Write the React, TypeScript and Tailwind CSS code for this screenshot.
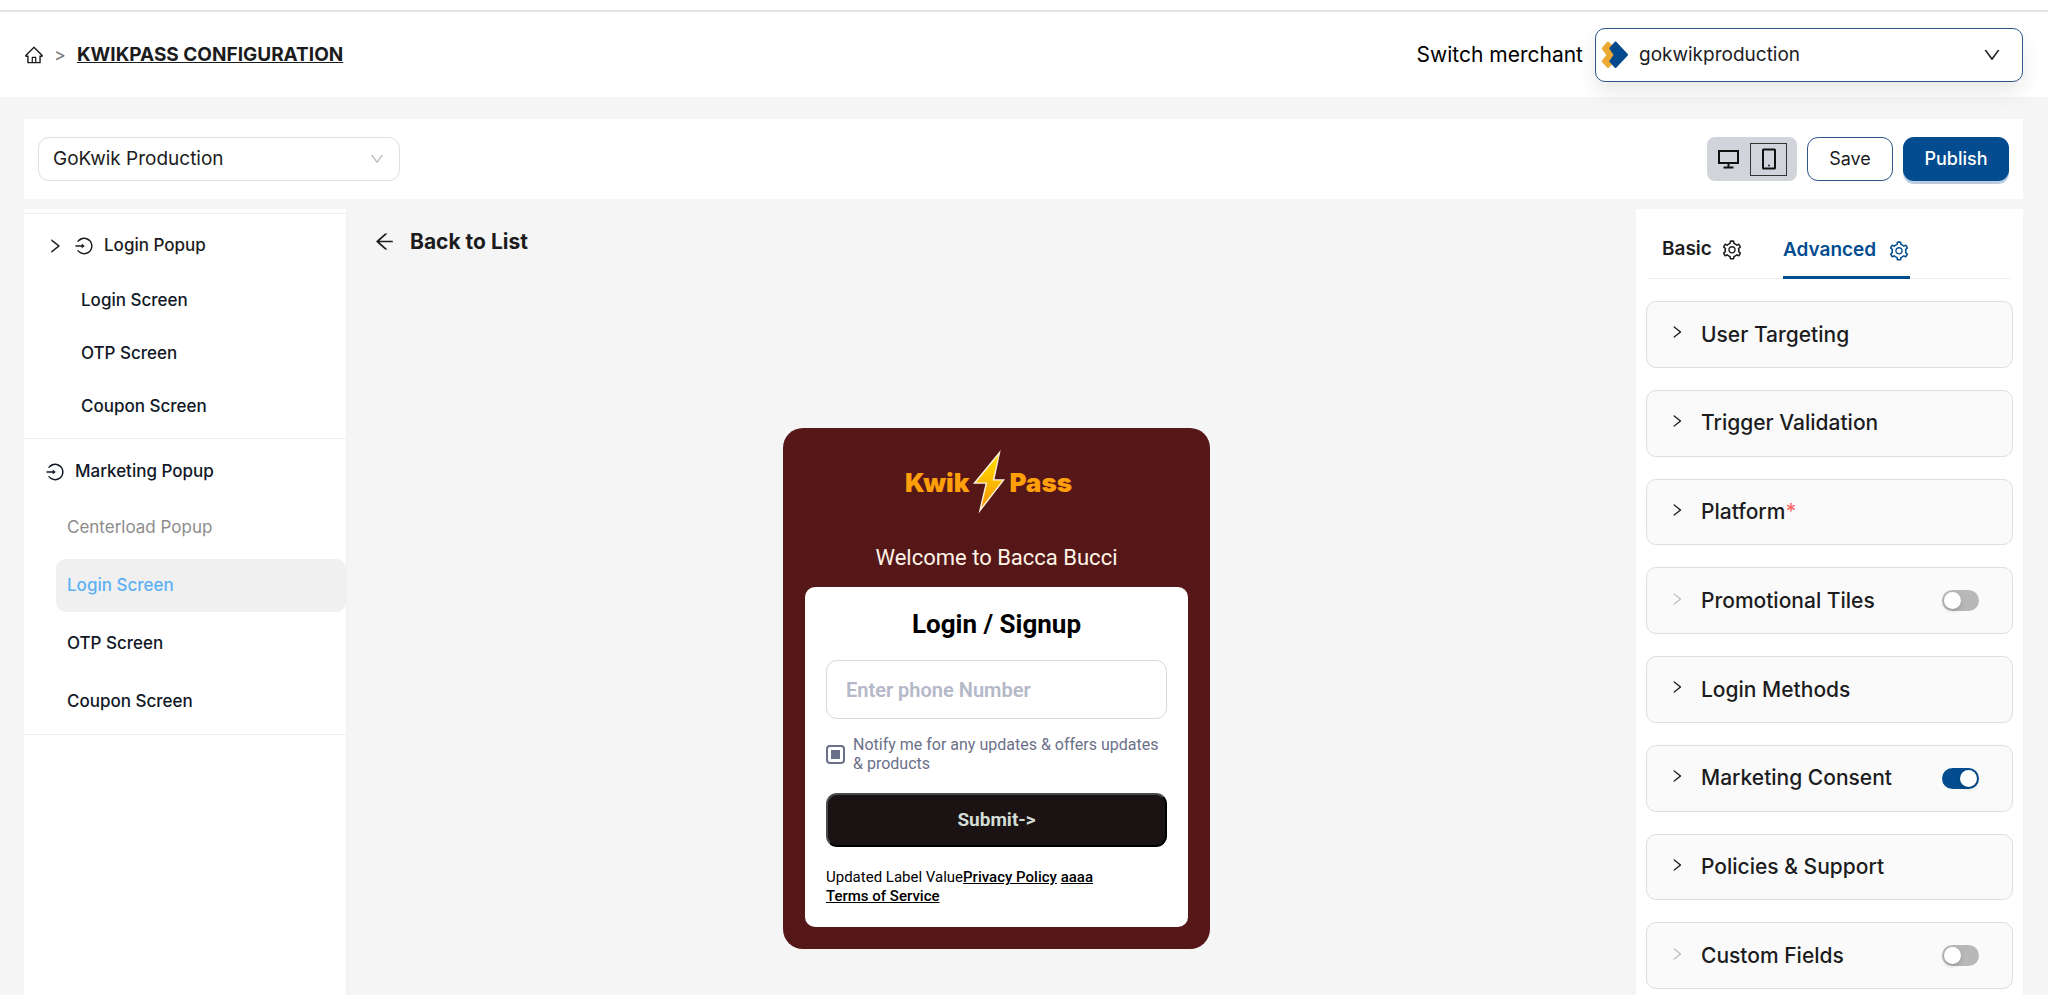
import React, { useState } from 'react'
import {
    AiOutlineArrowLeft,
    AiOutlineDown,
    AiOutlineHome,
    AiOutlineLogin,
    AiOutlineRight,
    AiOutlineSetting,
} from 'react-icons/ai';

const MerchantLogo = () => (
    <svg viewBox="0 0 28 28" className="size-7 shrink-0" strokeWidth="2" strokeLinejoin="round" aria-hidden="true">
        <path d="M7 1.500 1.700 7.300 6.500 14 1.700 20.300 7 26 12 21 12 6.500Z" fill="#ecaa35" stroke="#ecaa35" />
        <path d="M14.500 1.500 26 13.700 14.500 26 9.300 20.300 13.700 14 9.300 7.300Z" fill="#024a8d" stroke="#024a8d" />
    </svg>
);

const DesktopIcon = () => (
    <svg viewBox="0 0 24 24" className="size-6" fill="none" stroke="#111" strokeWidth="2" aria-hidden="true">
        <path d="M3 4h19v12H3zM12.500 16v4M7.500 20.500h10" />
    </svg>
);

const PhoneIcon = () => (
    <svg viewBox="0 0 16 24" className="h-6 w-4" fill="none" stroke="#111" strokeWidth="2" aria-hidden="true">
        <rect x="2" y="2.500" width="12" height="19" rx="0.500" />
        <circle cx="8" cy="18.500" r="0.900" fill="#111" stroke="none" />
    </svg>
);

const Bolt = () => (
    <svg viewBox="0 0 34 66" className="h-[66px] w-[34px]" aria-hidden="true">
        <defs>
            <linearGradient id="bolt" x1="0" y1="0" x2="0" y2="1">
                <stop offset="0" stopColor="#ffe000" />
                <stop offset="1" stopColor="#f99500" />
            </linearGradient>
        </defs>
        <path d="M28.700 1 1 34.800H13.500L6.500 64.500 33 30.300H22.500Z" fill="#fff3dc" />
        <path d="M26.500 6 4 33.500H15.300L9.300 58.500 30.300 31.500H20.700Z" fill="url(#bolt)" />
    </svg>
);

const loginItems = ["Login Screen", "OTP Screen", "Coupon Screen"];

const marketingItems = [
    { label: "Centerload Popup", className: "text-[#8c8c8c]" },
    { label: "Login Screen", className: "bg-[#f0f0f0] font-medium text-[#5eb0f5]" },
    { label: "OTP Screen", className: "font-medium text-[#111827]" },
    { label: "Coupon Screen", className: "font-medium text-[#111827]" },
];

const panels: { title: string, required?: boolean, enabled?: boolean }[] = [
    { title: "User Targeting" },
    { title: "Trigger Validation" },
    { title: "Platform", required: true },
    { title: "Promotional Tiles", enabled: false },
    { title: "Login Methods" },
    { title: "Marketing Consent", enabled: true },
    { title: "Policies & Support" },
    { title: "Custom Fields", enabled: false },
];

const Header = () => (
    <div className="bg-white pt-[10px]">
        <header className="flex h-[87px] items-center justify-between border-t-2 border-[#e4e4e4] pr-[25px] pl-6">
            <nav className="flex items-center" aria-label="Breadcrumb">
                <a href="#" aria-label="Home"><AiOutlineHome className="size-5" /></a>
                <span className="ml-[10px] text-lg text-[#777]">&gt;</span>
                <a href="#" className="ml-[11px] text-[19px] leading-7 font-bold underline">KWIKPASS CONFIGURATION</a>
            </nav>
            <div className="flex items-center gap-3">
                <label htmlFor="merchant" className="text-[21px] text-black">Switch merchant</label>
                <div className="relative z-10 flex h-[54px] w-[428px] items-center rounded-[10px] border border-[#2f5589] bg-white pl-[5px] shadow-[0_10px_20px_rgba(0,0,0,0.09)]">
                    <MerchantLogo />
                    <select id="merchant" className="h-full flex-1 appearance-none bg-transparent pt-[2px] pl-[10px] text-[19px] outline-none">
                        <option>gokwikproduction</option>
                    </select>
                    <AiOutlineDown className="pointer-events-none absolute right-5 size-5" />
                </div>
            </div>
        </header>
    </div>
);

const Toolbar = () => (
    <div className="flex h-20 items-center justify-between bg-white px-[14px]">
        <div className="relative flex h-11 w-[362px] items-center rounded-[11px] border border-[#dfdfdf]">
            <select aria-label="Store" className="h-full flex-1 appearance-none bg-transparent pt-px pl-[14px] text-[19px] outline-none">
                <option>GoKwik Production</option>
            </select>
            <AiOutlineDown className="pointer-events-none absolute right-[14px] size-4 text-[#b8b8b8]" />
        </div>
        <div className="flex items-center gap-[10px]">
            <div className="flex h-11 w-[90px] items-center justify-between rounded-lg bg-[#d1d5db] pr-[10px] pl-[9px]">
                <button type="button" aria-label="Desktop preview"><DesktopIcon /></button>
                <button type="button" aria-label="Mobile preview" className="flex h-[33px] w-[37px] items-center justify-center border border-[#333]"><PhoneIcon /></button>
            </div>
            <button type="button" className="h-11 w-[86px] rounded-[11px] border border-[#2f5589] bg-white text-lg shadow-[0_2px_0_rgba(0,0,0,0.02)]">Save</button>
            <button type="button" className="h-11 w-[106px] rounded-[11px] bg-[#034c8f] text-lg font-medium text-white shadow-[0_3px_0_#b9cbdc]">Publish</button>
        </div>
    </div>
);

const Sidebar = () => (
    <aside className="w-[323px] shrink-0 border-r border-[#f0f0f0] bg-white text-[17px]">
        <div className="mt-1 border-t border-b border-[#efefef] pb-[5px]">
            <button type="button" className="flex h-[60px] w-full items-center pt-1 pl-[22px] font-medium">
                <AiOutlineRight className="size-[18px]" />
                <AiOutlineLogin className="ml-[10px] size-5" />
                <span className="ml-[10px]">Login Popup</span>
            </button>
            {loginItems.map((item) => (
                <button key={item} type="button" className="block h-[53px] w-full pl-[57px] text-left font-medium text-[#111827]">{item}</button>
            ))}
        </div>
        <div className="border-b border-[#efefef] pb-[6px]">
            <button type="button" className="flex h-[62px] w-full items-center pt-1 pl-[21px] font-medium text-[#111827]">
                <AiOutlineLogin className="size-5" />
                <span className="ml-[10px]">Marketing Popup</span>
            </button>
            <div className="flex flex-col gap-[5px] pl-8">
                {marketingItems.map((item) => (
                    <button key={item.label} type="button" className={`h-[53px] rounded-[10px] pl-[11px] text-left ${item.className}`}>{item.label}</button>
                ))}
            </div>
        </div>
    </aside>
);

const PhonePreview = () => (
    <section className="w-[427px] rounded-[20px] bg-[#561719] px-[22px] pt-[21px] pb-[22px] font-[Roboto,sans-serif]">
        <div className="flex items-center justify-center gap-[3px] pr-4 font-[Inter,sans-serif] text-[26px] font-black text-[#ff9f0a]">
            <span>Kwik</span>
            <Bolt />
            <span>Pass</span>
        </div>
        <p className="mt-[26px] text-center text-[22px] leading-[34px] text-[#fff3e6]">Welcome to Bacca Bucci</p>
        <form className="mt-3 rounded-[10px] bg-white px-[21px] pt-[21px] pb-[21px] text-black" onSubmit={(e) => e.preventDefault()}>
            <h2 className="text-center text-[26px] leading-8 font-bold">Login / Signup</h2>
            <input type="tel" aria-label="Phone number" placeholder="Enter phone Number" className="mt-5 h-[59px] w-full rounded-[11px] border border-[#d9d9de] px-[19px] text-xl font-semibold outline-none placeholder:text-[#b4b8c8]" />
            <label className="mt-4 flex items-center gap-2 text-base leading-[19px] text-[#6b7089]">
                <input type="checkbox" defaultChecked className="size-[19px] shrink-0 appearance-none rounded border-2 border-[#6b7089] p-[3px] checked:bg-[#6b7089] checked:bg-clip-content" />
                <span>Notify me for any updates &amp; offers updates &amp; products</span>
            </label>
            <button type="submit" className="mt-5 h-[54px] w-full rounded-[11px] border-2 border-t-[#4a4a4a] border-r-black border-b-black border-l-[#4a4a4a] bg-[#1b1213] text-[19px] font-bold text-[#d3ddd5]">Submit-&gt;</button>
            <p className="mt-[21px] text-[15px] leading-[19px]">
                Updated Label Value<a href="#" className="font-medium underline">Privacy Policy</a> <a href="#" className="font-medium underline">aaaa</a>
                <br />
                <a href="#" className="font-medium underline">Terms of Service</a>
            </p>
        </form>
    </section>
);

const Switch = ({ label, initial }: { label: string, initial: boolean }) => {
    const [on, setOn] = useState(initial);

    return (
        <button
            type="button"
            role="switch"
            aria-checked={on}
            aria-label={label}
            onClick={() => setOn(!on)}
            className={`flex h-[21px] w-[37px] items-center rounded-full px-[2px] ${on ? "justify-end bg-[#034c8f]" : "justify-start bg-[#b8b8b8]"}`}
        >
            <span className="size-[17px] rounded-full bg-white shadow-[0_2px_4px_rgba(0,35,11,0.2)]"></span>
        </button>
    );
};

const Settings = () => (
    <aside className="flex w-[387px] shrink-0 flex-col bg-white px-[10px] pb-[6px]">
        <div className="mx-[2px] flex h-[70px] gap-10 border-b border-[#f0f0f0] pl-[14px] text-[19px] font-semibold" role="tablist">
            <button type="button" role="tab" aria-selected="false" className="flex items-center gap-[9px] pt-3">
                Basic <AiOutlineSetting className="size-[22px]" />
            </button>
            <button type="button" role="tab" aria-selected="true" className="-mb-px flex items-center gap-3 border-b-3 border-[#034c8f] pt-4 text-[#034c8f]">
                Advanced <AiOutlineSetting className="size-[22px]" />
            </button>
        </div>
        <div className="mt-[22px] grid flex-1 auto-rows-fr gap-[22px]">
            {panels.map((panel) => (
                <div key={panel.title} className="flex items-center rounded-[10px] border border-[#dedede] bg-[#fafafa] pr-[33px] pl-[22px]">
                    <button type="button" className="flex flex-1 items-center gap-4 text-left text-[21px] font-medium">
                        <AiOutlineRight className={`mb-1 size-4 ${panel.enabled === false ? "text-[#bfbfbf]" : ""}`} />
                        <span>{panel.title}{panel.required && <span className="text-[#ff6b6b]">*</span>}</span>
                    </button>
                    {panel.enabled !== undefined && <Switch label={panel.title} initial={panel.enabled} />}
                </div>
            ))}
        </div>
    </aside>
);

const App = () => {
    return (
        <div className="flex min-h-screen flex-col bg-[#f5f5f5] font-[Inter,sans-serif] text-[#1c1c1e]">
            <Header />
            <main className="flex flex-1 flex-col gap-[10px] pt-[22px] pr-[25px] pl-6">
                <Toolbar />
                <div className="flex flex-1">
                    <Sidebar />
                    <div className="flex flex-1 flex-col pt-[17px] pb-[46px]">
                        <button type="button" className="ml-[26px] flex items-center gap-[14px] self-start text-[21px] font-bold">
                            <AiOutlineArrowLeft className="size-[23px]" />
                            Back to List
                        </button>
                        <div className="flex flex-1 items-end justify-center pl-[10px]">
                            <PhonePreview />
                        </div>
                    </div>
                    <Settings />
                </div>
            </main>
        </div>
    )
}

export default App;
